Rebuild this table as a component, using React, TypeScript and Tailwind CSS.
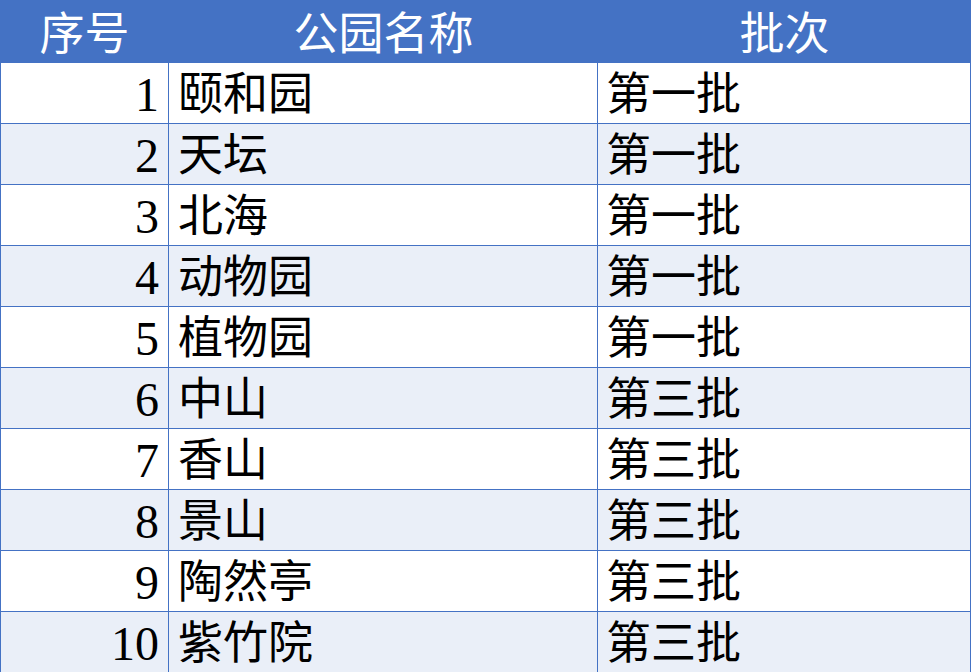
import React from "react";

const rows: [number, string, string][] = [
  [1, "颐和园", "第一批"],
  [2, "天坛", "第一批"],
  [3, "北海", "第一批"],
  [4, "动物园", "第一批"],
  [5, "植物园", "第一批"],
  [6, "中山", "第三批"],
  [7, "香山", "第三批"],
  [8, "景山", "第三批"],
  [9, "陶然亭", "第三批"],
  [10, "紫竹院", "第三批"],
];

const font = {
  fontFamily: '"Liberation Serif", "Noto Sans CJK SC", serif',
};

export default function App() {
  return (
    <div className="w-[971px] h-[672px] bg-white text-[45px] leading-none text-black" style={font}>
      <div className="flex h-[62px] bg-[#4472C4] text-white">
        <div className="w-[169px] flex items-center justify-center pt-2">序号</div>
        <div className="w-[429px] flex items-center justify-center pt-2">公园名称</div>
        <div className="flex-1 flex items-center justify-center pt-2">批次</div>
      </div>
      <div className="border-l border-r border-b border-[#4472C4]">
        {rows.map(([n, name, batch], i) => (
          <div
            key={n}
            className={`flex h-[61px] border-t border-[#4472C4] ${i % 2 === 1 ? "bg-[#EAEFF8]" : "bg-white"}`}
          >
            <div className="w-[168px] border-r border-[#4472C4] flex items-center justify-end pr-[9px] pt-1 text-[48px]">
              {n}
            </div>
            <div className="w-[429px] border-r border-[#4472C4] flex items-center pl-[9px] pt-1">{name}</div>
            <div className="flex-1 flex items-center pl-[8px] pt-1">{batch}</div>
          </div>
        ))}
      </div>
    </div>
  );
}
